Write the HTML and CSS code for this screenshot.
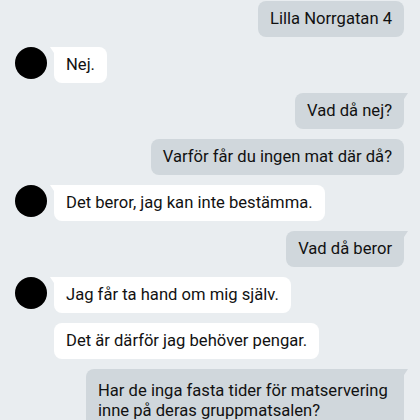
FILE: index.html
```html
<!DOCTYPE html>
<html lang="sv">
<head>
    <meta charset="UTF-8">
    <title>Chatt</title>
    <link rel="stylesheet" href="styles.css">
</head>
<body>
    <div class="chat">
        <div class="row sent">
            <div class="bubble">Lilla Norrgatan 4</div>
        </div>

        <div class="row received">
            <div class="avatar"></div>
            <div class="bubble tail">Nej.</div>
        </div>

        <div class="row sent">
            <div class="bubble tail">Vad då nej?</div>
        </div>
        <div class="row sent">
            <div class="bubble">Varför får du ingen mat där då?</div>
        </div>

        <div class="row received">
            <div class="avatar"></div>
            <div class="bubble tail">Det beror, jag kan inte bestämma.</div>
        </div>

        <div class="row sent">
            <div class="bubble tail">Vad då beror</div>
        </div>

        <div class="row received">
            <div class="avatar"></div>
            <div class="bubble tail">Jag får ta hand om mig själv.</div>
        </div>
        <div class="row received">
            <div class="avatar empty"></div>
            <div class="bubble">Det är därför jag behöver pengar.</div>
        </div>

        <div class="row sent">
            <div class="bubble tail multi">Har de inga fasta tider för matservering<br>inne på deras gruppmatsalen?</div>
        </div>
    </div>
</body>
</html>
```

FILE: styles.css
```css
body {
    margin: 0;
    background-color: #e9edf0;
    font-family: Roboto, "Liberation Sans", sans-serif;
    font-size: 16.6px;
    line-height: 20px;
    color: #111;
    overflow: hidden;
}
.chat {
    display: flex;
    flex-direction: column;
    gap: 10px;
    padding: 1px 16px 0 15px;
}
.row {
    display: flex;
    align-items: flex-start;
}
.sent {
    justify-content: flex-end;
}
.received {
    gap: 7px;
}
.avatar {
    width: 32px;
    height: 32px;
    border-radius: 50%;
    background-color: #000;
    flex-shrink: 0;
}
.avatar.empty {
    background-color: transparent;
}
.bubble {
    position: relative;
    padding: 8px 12px;
    border-radius: 8px;
    box-sizing: border-box;
    white-space: nowrap;
}
.sent .bubble {
    background-color: #d0d7dc;
}
.received .bubble {
    background-color: #fff;
}
.bubble.multi {
    width: 318px;
    padding-top: 12px;
}
/* little flag on the first bubble of a group */
.bubble.tail::before {
    content: "";
    position: absolute;
    top: 0;
    width: 0;
    height: 0;
    border-top: 6px solid;
}
.received .bubble.tail {
    border-top-left-radius: 0;
}
.received .bubble.tail::before {
    left: -4px;
    border-top-color: #fff;
    border-left: 4px solid transparent;
}
.sent .bubble.tail {
    border-top-right-radius: 0;
}
.sent .bubble.tail::before {
    right: -4px;
    border-top-color: #d0d7dc;
    border-right: 4px solid transparent;
}
```
